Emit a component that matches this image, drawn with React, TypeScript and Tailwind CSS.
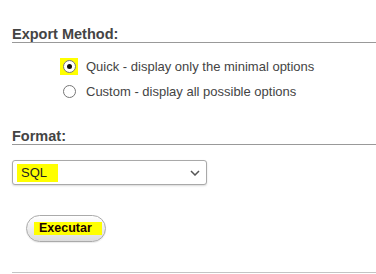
import { useState } from 'react';

const font = { fontFamily: '"Liberation Sans", Arial, sans-serif' };

function Radio({ checked }: { checked: boolean }) {
  return (
    <span className="flex h-[13px] w-[13px] items-center justify-center rounded-full border border-[#767676] bg-white">
      {checked && <span className="h-[5px] w-[5px] rounded-full bg-[#111]" />}
    </span>
  );
}

export default function App() {
  const [method, setMethod] = useState<'quick' | 'custom'>('quick');

  return (
    <div
      className="h-[274px] w-[376px] overflow-hidden bg-white pl-[12px] text-[#444]"
      style={font}
    >
      <h2 className="border-b border-[#999] pt-[26px] text-[14.5px] font-bold leading-[16px]">
        Export Method:
      </h2>

      <div className="mt-[11px] flex flex-col pl-[48px] text-[13px]">
        <label className="flex h-[25px] items-center" onClick={() => setMethod('quick')}>
          <span className="flex h-[17px] w-[18px] items-center justify-center bg-[#ffff00]">
            <Radio checked={method === 'quick'} />
          </span>
          <span className="ml-[8px]">Quick - display only the minimal options</span>
        </label>
        <label className="flex h-[25px] items-center" onClick={() => setMethod('custom')}>
          <span className="flex h-[17px] w-[18px] items-center justify-center">
            <Radio checked={method === 'custom'} />
          </span>
          <span className="ml-[8px]">Custom - display all possible options</span>
        </label>
      </div>

      <h2 className="mt-[24px] border-b border-[#999] text-[14.5px] font-bold leading-[16px]">
        Format:
      </h2>

      <div className="mt-[15px] flex h-[25px] w-[195px] items-center justify-between rounded-[3px] border border-[#a9a9a9] bg-white pl-[4px] pr-[5px] shadow-[0_1px_2px_rgba(0,0,0,0.15)]">
        <span className="bg-[#ffff00] pl-[4px] pr-[11px] py-[1px] text-[13px] leading-[16px] text-[#222]">
          SQL
        </span>
        <svg width="10" height="6" viewBox="0 0 10 6" className="mr-[1px]">
          <path d="M1 1l4 4 4-4" fill="none" stroke="#555" strokeWidth="1.5" />
        </svg>
      </div>

      <div className="ml-[14px] mt-[30px] flex h-[27px] w-[80px] items-center rounded-full border border-[#aaa] bg-gradient-to-b from-[#ffffff] to-[#dcdcdc] pl-[7px] shadow-[0_1px_1px_rgba(0,0,0,0.08)]">
        <span className="bg-[#ffff00] pl-[5px] pr-[10px] text-[12.5px] font-bold leading-[13px] text-[#1a0000]">
          Executar
        </span>
      </div>

      <div className="mt-[30px] border-b border-[#c4c4c4]" />
    </div>
  );
}
